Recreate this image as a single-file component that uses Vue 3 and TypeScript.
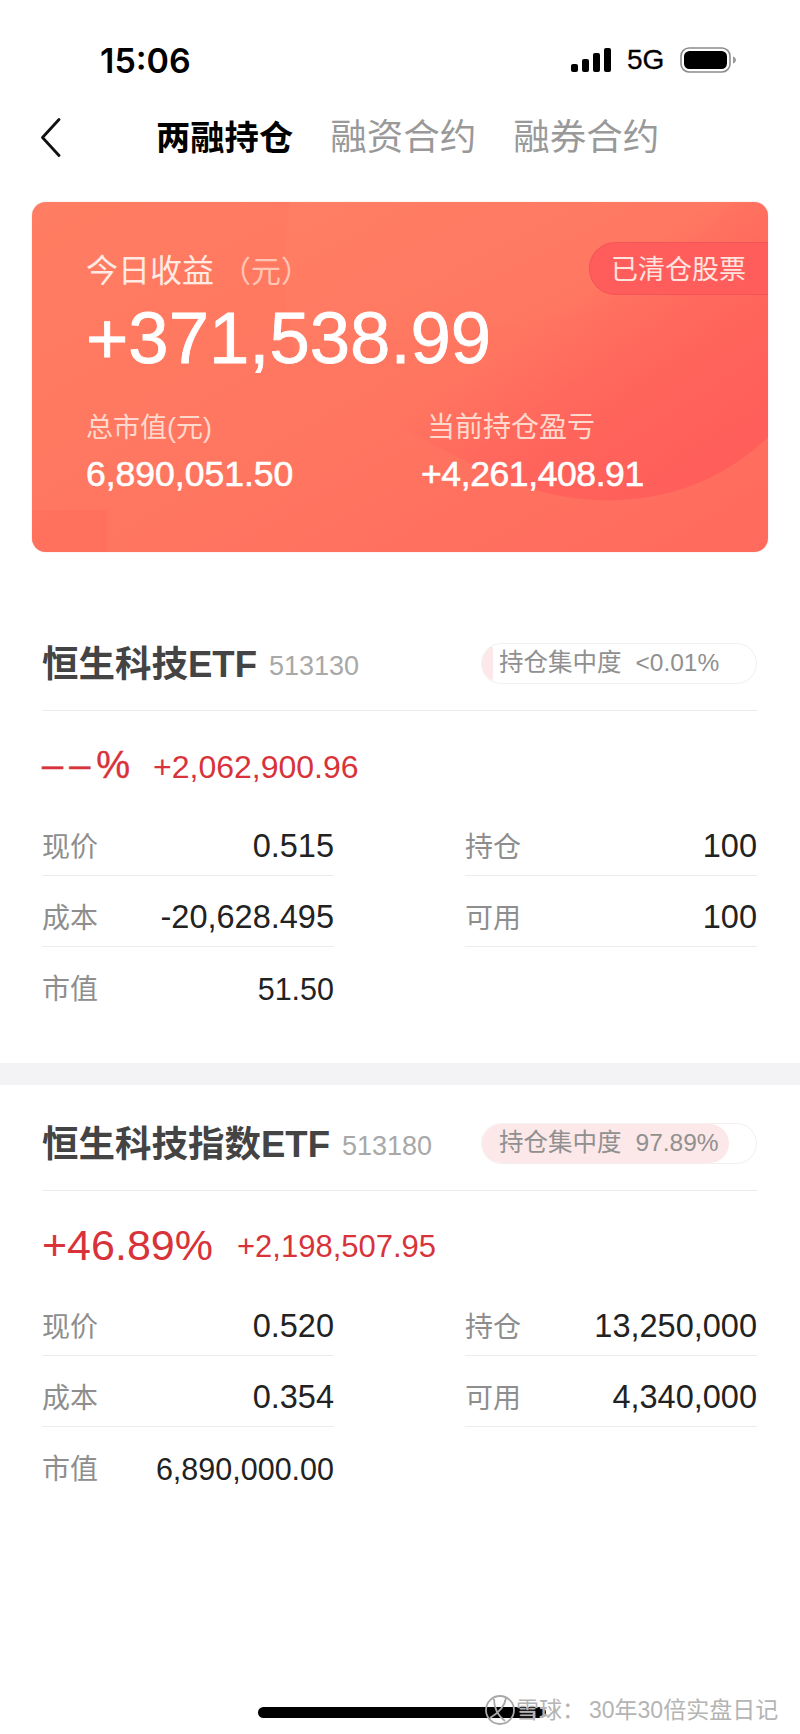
<script setup lang="ts">
interface Row { label: string; value: string }
interface Stock {
  name: string; code: string; share: string; fill: number; pct: string; profit: string;
  left: Row[]; right: Row[]; key: string;
}
const stocks: Stock[] = [
  { key: 'a', name: '恒生科技ETF', code: '513130', share: '<0.01%', fill: 4, pct: '––%', profit: '+2,062,900.96',
    left: [{ label: '现价', value: '0.515' }, { label: '成本', value: '-20,628.495' }, { label: '市值', value: '51.50' }],
    right: [{ label: '持仓', value: '100' }, { label: '可用', value: '100' }] },
  { key: 'b', name: '恒生科技指数ETF', code: '513180', share: '97.89%', fill: 90, pct: '+46.89%', profit: '+2,198,507.95',
    left: [{ label: '现价', value: '0.520' }, { label: '成本', value: '0.354' }, { label: '市值', value: '6,890,000.00' }],
    right: [{ label: '持仓', value: '13,250,000' }, { label: '可用', value: '4,340,000' }] },
]
</script>

<template>
  <div class="page">
    <header class="status">
      <span class="time">15:06</span>
      <div class="status-right">
        <svg width="40" height="24" viewBox="0 0 40 24" fill="#000">
          <rect x="0" y="16" width="7" height="8" rx="2" />
          <rect x="11" y="11" width="7" height="13" rx="2" />
          <rect x="22" y="5" width="7" height="19" rx="2" />
          <rect x="33" y="0" width="7" height="24" rx="2" />
        </svg>
        <span class="net">5G</span>
        <svg width="56" height="26" viewBox="0 0 56 26">
          <rect x="1" y="1" width="49" height="24" rx="8" fill="none" stroke="#8c8c8c" stroke-width="1.6" />
          <rect x="4" y="4" width="43" height="18" rx="5.5" fill="#000" />
          <path d="M53 9.5c2 .6 3 2 3 3.500s-1 2.900-3 3.500z" fill="#9a9a9a" />
        </svg>
      </div>
    </header>

    <nav class="nav">
      <svg class="back" width="21" height="39" viewBox="0 0 21 39" fill="none">
        <path d="M19 1.500 2.500 19.500 19 37.500" stroke="#111" stroke-width="2.800" stroke-linecap="round" stroke-linejoin="round" />
      </svg>
      <span class="tab active">两融持仓</span>
      <span class="tab t2">融资合约</span>
      <span class="tab t3">融券合约</span>
    </nav>

    <section class="card">
      <svg class="decor" viewBox="0 0 736 350" preserveAspectRatio="none">
        <defs>
          <linearGradient id="blob" gradientUnits="userSpaceOnUse" x1="520" y1="110" x2="640" y2="280">
            <stop offset="0" stop-color="#ff5b59" stop-opacity="0" />
            <stop offset="0.5" stop-color="#ff5b59" stop-opacity=".55" />
            <stop offset="1" stop-color="#ff5b59" stop-opacity=".8" />
          </linearGradient>
          <linearGradient id="glow" x1="0" y1="0" x2="1" y2="0.7">
            <stop offset="0" stop-color="#ff8468" stop-opacity=".4" />
            <stop offset="1" stop-color="#ff8468" stop-opacity="0" />
          </linearGradient>
        </defs>
        <path d="M258 0C250 50 252 110 262 150L560 110C620 70 680 30 700 0Z" fill="url(#glow)" />
        <path d="M296 187C340 170 420 60 560 30C640 10 700 0 736 0V235C670 300 570 315 480 280C410 250 350 215 296 187Z" fill="url(#blob)" />
        <rect x="0" y="308" width="75" height="42" fill="#ff6a5c" opacity=".45" />
      </svg>
      <div class="card-body">
        <div class="today"><span>今日收益</span><span class="unit">（元）</span></div>
        <div class="big">+371,538.99</div>
        <div class="stats">
          <div class="stat s1">
            <div class="stat-label">总市值(元)</div>
            <div class="stat-value">6,890,051.50</div>
          </div>
          <div class="stat s2">
            <div class="stat-label sl2">当前持仓盈亏</div>
            <div class="stat-value sv2">+4,261,408.91</div>
          </div>
        </div>
      </div>
      <div class="cleared">已清仓股票</div>
    </section>

    <section v-for="s in stocks" :key="s.key" class="stock" :class="'stock-' + s.key">
      <div class="stock-head">
        <span class="name">{{ s.name }}</span>
        <span class="code">{{ s.code }}</span>
        <div class="share">
          <div class="share-fill" :style="{ width: s.fill + '%' }"></div>
          <span class="share-text"><span>持仓集中度</span><span>{{ s.share }}</span></span>
        </div>
      </div>
      <div class="pnl">
        <span class="pct">{{ s.pct }}</span>
        <span class="profit">{{ s.profit }}</span>
      </div>
      <div class="grid">
        <div class="col">
          <div v-for="(r, i) in s.left" :key="r.label" class="row" :class="{ last: i === 2 }">
            <span class="label">{{ r.label }}</span><span class="value">{{ r.value }}</span>
          </div>
        </div>
        <div class="col">
          <div v-for="r in s.right" :key="r.label" class="row">
            <span class="label">{{ r.label }}</span><span class="value">{{ r.value }}</span>
          </div>
        </div>
      </div>
    </section>

    <div class="band"></div>

    <div class="home"></div>
    <div class="mark">
      <svg width="30" height="30" viewBox="0 0 30 30" fill="none" stroke="#a8a8a8" stroke-width="1.800">
        <circle cx="15" cy="15" r="14" />
        <path d="M9 4c0 8 3 16 11 22M21 3c-1 7-6 14-16 20" />
      </svg>
      <span class="mark-a">雪球：</span>
      <span class="mark-b">30年30倍实盘日记</span>
    </div>
  </div>
</template>

<style scoped>
.page {
  position: relative;
  width: 800px;
  height: 1734px;
  background: #fff;
  overflow: hidden;
  font-family: "Liberation Sans", "Noto Sans CJK SC", sans-serif;
}
.status {
  height: 100px;
  padding: 20px 64px 0 100px;
  display: flex;
  align-items: center;
  justify-content: space-between;
  box-sizing: border-box;
}
.time { font-family: Inter, sans-serif; font-size: 34px; font-weight: 600; color: #000; }
.status-right { display: flex; align-items: center; gap: 15px; }
.net { font-size: 28px; color: #000; width: 38px; margin-left: 1px; -webkit-text-stroke: .3px #000; }
.nav {
  height: 76px;
  display: flex;
  align-items: center;
  padding-left: 40px;
  margin-bottom: 26px;
}
.back { flex: none; margin-right: 95px; margin-top: -2px; }
.tab { font-size: 36.500px; line-height: 44px; color: #999; white-space: nowrap; }
.active { font-size: 34.300px; font-weight: 700; color: #000; }
.t2 { margin-left: 37px; }
.t3 { margin-left: 37px; }
.card {
  position: relative;
  width: 736px;
  height: 350px;
  margin-left: 32px;
  border-radius: 14px;
  overflow: hidden;
  background: linear-gradient(150deg, #ff7d62 0%, #ff7660 50%, #ff6a5d 100%);
  box-shadow: 0 0 1px rgba(220, 70, 60, .6);
}
.decor { position: absolute; inset: 0; width: 100%; height: 100%; }
.card-body { position: relative; padding: 50px 0 0 54px; color: #fff; }
.today { font-size: 32px; line-height: 38px; color: #ffeae4; white-space: nowrap; }
.unit { color: #ffc6b6; margin-left: 7px; font-size: 30px; }
.big { font-size: 72.500px; line-height: 84px; margin-top: 5px; -webkit-text-stroke: .8px #fff; white-space: nowrap; }
.stats { display: flex; margin-top: 31px; }
.stat { flex: none; }
.s1 { width: 335px; }
.stat-label { font-size: 27px; line-height: 34px; color: #ffd9ce; white-space: nowrap; }
.sl2 { margin-left: 6px; font-size: 28px; }
.stat-value { font-size: 35.500px; line-height: 42px; margin-top: 8px; -webkit-text-stroke: .6px #fff; white-space: nowrap; }
.sv2 { letter-spacing: -.4px; }
.cleared {
  position: absolute;
  top: 40px;
  right: 0;
  width: 179px;
  height: 53px;
  box-sizing: border-box;
  padding-left: 21px;
  border: 1px solid #f5535a;
  border-right: 0;
  border-radius: 27px 0 0 27px;
  background: #ff5d5c;
  color: #ffe3dc;
  font-size: 27px;
  line-height: 55px;
  white-space: nowrap;
}
.stock { position: relative; width: 715px; margin-left: 42px; box-sizing: content-box; }
.stock-a { padding-top: 87px; height: 424px; }
.stock-b { padding-top: 56px; height: 400px; }
.stock-head {
  height: 71px;
  display: flex;
  align-items: center;
  border-bottom: 1px solid #ececec;
}
.name { font-size: 36.500px; font-weight: 700; color: #444; position: relative; top: -13px; white-space: nowrap; }
.code { font-size: 27px; color: #a8a8a8; margin-left: 12px; position: relative; top: -8px; }
.share {
  position: absolute;
  right: 0;
  width: 276px;
  height: 41px;
  box-sizing: border-box;
  border: 1px solid #f4eeee;
  border-radius: 21px;
  margin-top: -23px;
  overflow: hidden;
}
.share-fill { position: absolute; left: 0; top: 0; bottom: 0; background: #fce8e8; border-radius: 21px; }
.share-text {
  position: absolute;
  left: 17px;
  top: 0;
  display: flex;
  gap: 14px;
  font-size: 24.500px;
  line-height: 38px;
  color: #909090;
  white-space: nowrap;
}
.pnl { height: 94px; display: flex; align-items: center; padding-top: 14px; box-sizing: border-box; color: #d8333a; white-space: nowrap; }
.pct { font-size: 43px; }
.profit { font-size: 31px; margin-left: 24px; position: relative; top: 2px; }
.stock-a .pct { width: 111px; font-size: 38px; letter-spacing: 6px; -webkit-text-stroke: .4px #d8333a; }
.stock-a .profit { font-size: 32px; margin-left: 0; }
.grid { display: flex; justify-content: space-between; }
.col { width: 292px; }
.row {
  height: 71px;
  box-sizing: border-box;
  padding-top: 26px;
  line-height: 32px;
  display: flex;
  justify-content: space-between;
  border-bottom: 1px solid #ececec;
}
.row.last { border-bottom: 0; }
.label { font-size: 28px; color: #8e8e8e; position: relative; top: 1px; }
.value { font-size: 32.500px; color: #222; position: relative; top: -1px; }
.row.last .value { font-size: 30.500px; top: 0; }
.band {
  position: absolute;
  left: 0;
  top: 1063px;
  width: 800px;
  height: 22px;
  background: #f3f3f5;
}
.home {
  position: absolute;
  left: 258px;
  top: 1707px;
  width: 288px;
  height: 11px;
  border-radius: 6px;
  background: #000;
}
.mark {
  position: absolute;
  left: 485px;
  top: 1695px;
  display: flex;
  align-items: center;
  font-size: 23px;
  line-height: 30px;
  color: #b4b4b4;
  white-space: nowrap;
  text-shadow: 0 0 1px #fff;
}
.mark-a { margin-left: 1px; }
.mark-b { margin-left: 4px; }
</style>
